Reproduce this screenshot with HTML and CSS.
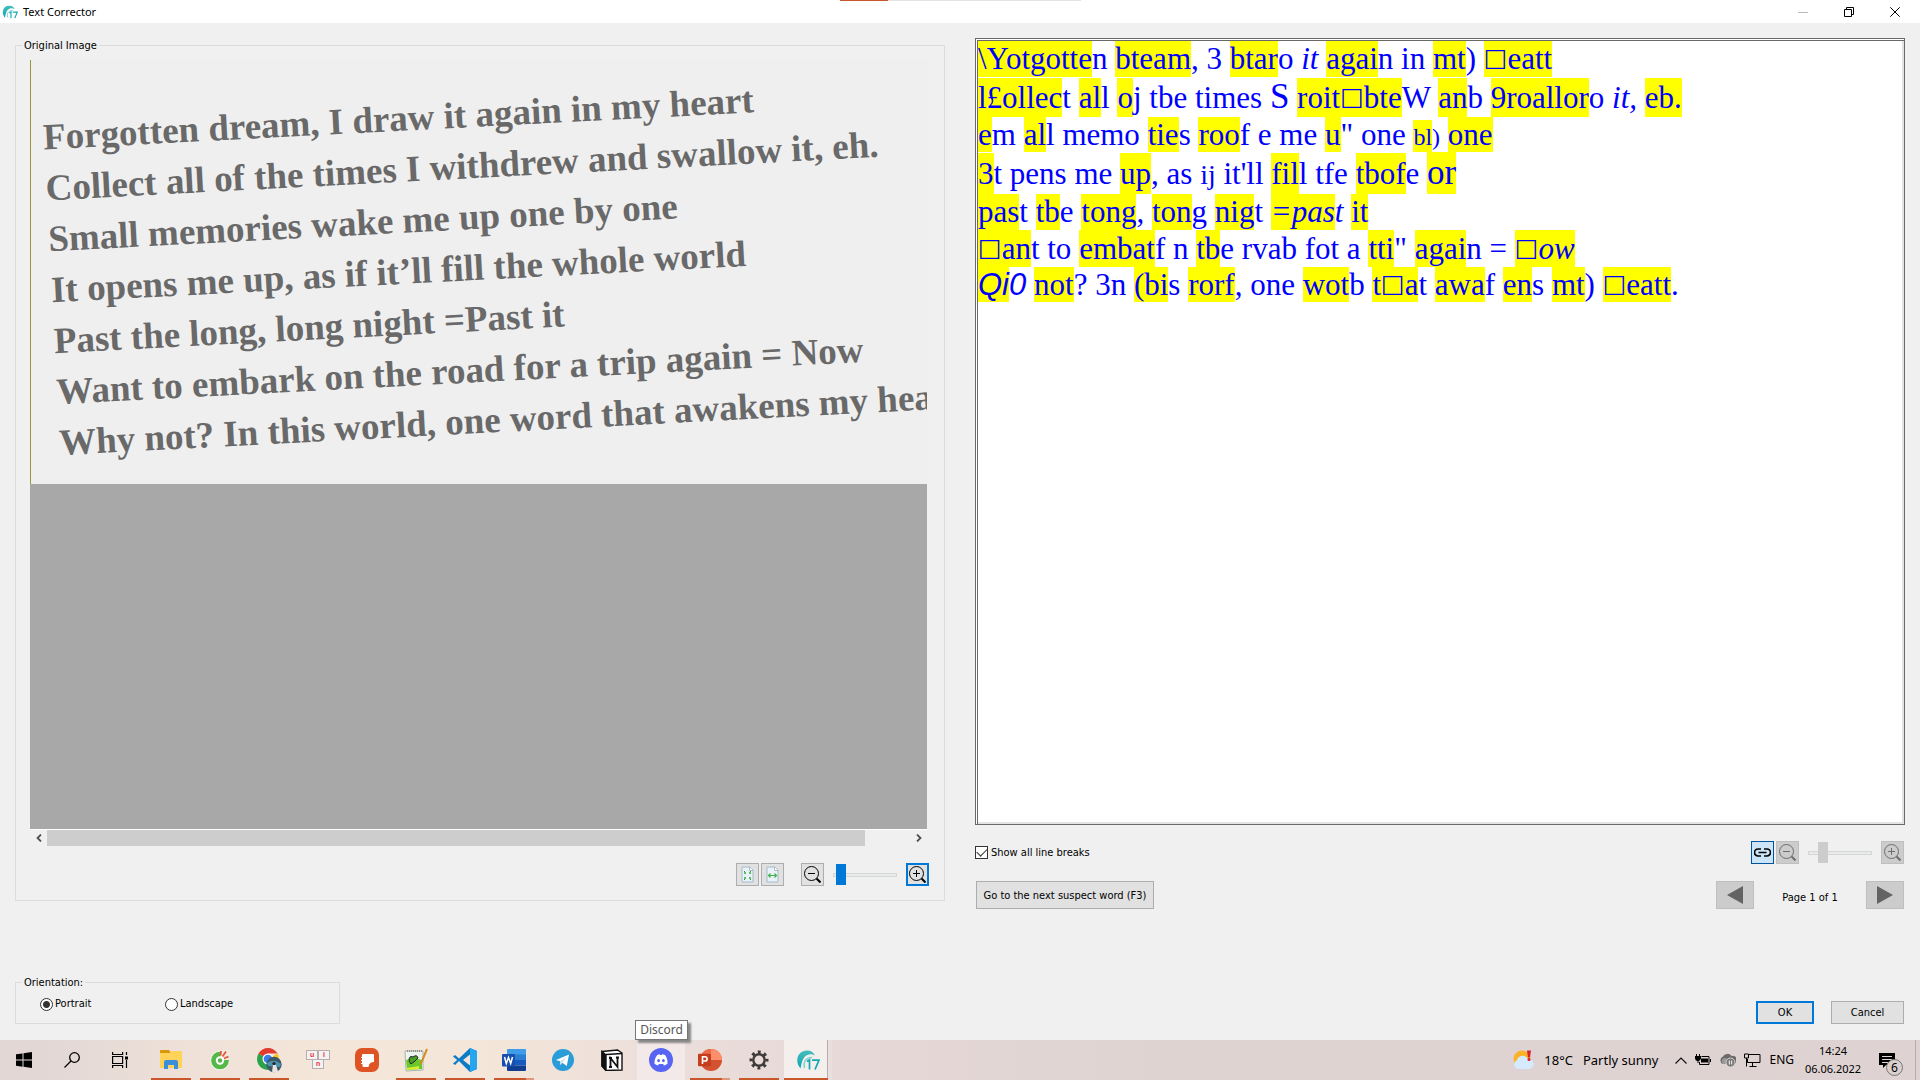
FILE: index.html
```html
<!DOCTYPE html>
<html lang="en">
<head>
<meta charset="utf-8">
<title>Text Corrector</title>
<link rel="stylesheet" href="styles.css">
</head>
<body>
<header class="titlebar">
  <svg class="app-icon" viewBox="0 0 24 20" aria-hidden="true"><use href="#logo17"/></svg>
  <h1 class="title">Text Corrector</h1>
  <button class="win-btn" aria-label="Minimize"><svg width="10" height="10"><path d="M0 5.500h10" stroke="#bbb" fill="none"/></svg></button>
  <button class="win-btn" aria-label="Restore"><svg width="10" height="10"><path d="M.5 2.500h7v7h-7zM2.500 2.500v-2h7v7h-2" stroke="#000" fill="none"/></svg></button>
  <button class="win-btn" aria-label="Close"><svg width="10" height="10"><path d="M.3 .3l9.400 9.400M9.700 .3L.3 9.700" stroke="#000" fill="none"/></svg></button>
  <div class="top-strip"></div>
</header>

<svg class="defs" aria-hidden="true">
  <defs>
    <linearGradient id="teal" x1="0" y1="0" x2="0" y2="1"><stop offset="0" stop-color="#45bdb9"/><stop offset="1" stop-color="#0fa7b5"/></linearGradient>
    <symbol id="logo17" viewBox="0 0 24 20">
      <path d="M4.500 18.500C-1 12.500.5 2.500 9 .8c5-1 8.500 1.200 10 4.700C16 3.800 11.500 3.500 8.500 7c-2.600 3-3 7-4 11.500z" fill="url(#teal)"/>
      <path d="M8.500 18C7 12 9.500 8 16 7.500" fill="none" stroke="#7fd3cf" stroke-width="1.500"/>
      <path d="M11 11.500l2.500-1.500v9.500M16 10.200h7l-4 9.300" fill="none" stroke="#12a9b5" stroke-width="1.700"/>
    </symbol>
    <symbol id="zoom-out" viewBox="0 0 17 17"><circle cx="7.500" cy="7.500" r="7" fill="none" stroke="currentColor"/><path d="M4 7.500h7" stroke="currentColor"/><path d="M12.500 12.500l4 4" stroke="currentColor" stroke-width="2"/></symbol>
    <symbol id="zoom-in" viewBox="0 0 17 17"><circle cx="7.500" cy="7.500" r="7" fill="none" stroke="currentColor"/><path d="M4 7.500h7M7.500 4v7" stroke="currentColor"/><path d="M12.500 12.500l4 4" stroke="currentColor" stroke-width="2"/></symbol>
    <symbol id="page" viewBox="0 0 13 17"><path d="M1 1h8l3 3v12H1z" fill="#e9f2f8" stroke="#a9bac6"/><path d="M8.500 1v3.500H12" fill="#fff" stroke="#a9bac6"/></symbol>
  </defs>
</svg>

<main class="window">
  <section class="column">
    <fieldset class="group source">
      <legend>Original Image</legend>
      <div class="viewer">
        <div class="scan">
          <div class="scan-text">
            <p>Forgotten dream, I draw it again in my heart</p>
            <p>Collect all of the times I withdrew and swallow it, eh.</p>
            <p>Small memories wake me up one by one</p>
            <p>It opens me up, as if it’ll fill the whole world</p>
            <p>Past the long, long night =Past it</p>
            <p>Want to embark on the road for a trip again = Now</p>
            <p>Why not? In this world, one word that awakens my heart</p>
          </div>
        </div>
        <div class="void"></div>
        <div class="scrollbar">
          <button class="scroll-btn" aria-label="Scroll left"><svg width="6" height="8"><path d="M5 .5L1.500 4 5 7.500" fill="none" stroke="#505050" stroke-width="1.800"/></svg></button>
          <div class="scroll-track"><div class="scroll-thumb"></div><div class="scroll-rest"></div></div>
          <button class="scroll-btn" aria-label="Scroll right"><svg width="6" height="8"><path d="M1 .5L4.500 4 1 7.500" fill="none" stroke="#505050" stroke-width="1.800"/></svg></button>
        </div>
      </div>
      <div class="tools">
        <button class="tool" aria-label="Fit page"><svg width="13" height="17"><use href="#page"/><path d="M3 7h2M8 7h2M3 12h2M8 12h2" stroke="#5cc067" stroke-width="2"/><path d="M3 5.500h1M9 5.500h1M3 13.500h1M9 13.500h1" stroke="#2a9d38"/></svg></button>
        <button class="tool" aria-label="Fit width"><svg width="13" height="17"><use href="#page"/><path d="M2.500 9.500h8M4.500 7.500l-2 2 2 2M8.500 7.500l2 2-2 2" stroke="#3db54a" stroke-width="1.200" fill="none"/></svg></button>
        <button class="tool spaced" aria-label="Zoom out"><svg width="17" height="17"><use href="#zoom-out"/></svg></button>
        <input class="slider" type="range" min="0" max="100" value="4" aria-label="Image zoom">
        <button class="tool focused" aria-label="Zoom in"><svg width="17" height="17"><use href="#zoom-in"/></svg></button>
      </div>
    </fieldset>

    <fieldset class="group orientation">
      <legend>Orientation:</legend>
      <label class="choice"><input type="radio" name="orientation" checked>Portrait</label>
      <label class="choice"><input type="radio" name="orientation">Landscape</label>
    </fieldset>
  </section>

  <section class="column">
    <div class="editor" role="textbox" aria-multiline="true" aria-label="Recognized text" contenteditable="true" spellcheck="false">
      <p class="h36"><mark>\Yotgotte</mark>n <mark>bteam</mark>, 3 <mark>btar</mark>o <i>it</i> <mark>agai</mark>n in <mark>mt</mark>) <mark><span class="box">□</span>eatt</mark></p>
      <p class="h40"><mark>l£ollec</mark>t <mark>al</mark>l <mark>o</mark>j tbe times <span class="large">S</span> <mark>roit<span class="box">□</span>bte</mark>W <mark>an</mark>b <mark>9roallor</mark>o <i>it,</i> <mark>eb.</mark></p>
      <p class="h35"><mark>e</mark>m <mark>al</mark>l memo <mark>tie</mark>s <mark>roo</mark>f e me <mark>u</mark>" one <span class="small"><mark>bl</mark>)</span> <mark>one</mark></p>
      <p class="h42"><mark>3</mark>t pens me <mark>up</mark>, as <span class="mid">ij</span> it'll <mark>fil</mark>l tfe <mark>tbof</mark>e <mark class="large">or</mark></p>
      <p class="h36"><mark>pas</mark>t <mark>tb</mark>e <mark>tong</mark>, <mark>ton</mark>g <mark>nig</mark>t <i><mark>=pas</mark>t</i> <mark>it</mark></p>
      <p class="h37"><mark><span class="box">□</span>an</mark>t to <mark>embat</mark>f n <mark>tb</mark>e rvab fot a <mark>tti</mark>" <mark>agai</mark>n = <mark><span class="box">□</span><i>ow</i></mark></p>
      <p class="h35"><span class="sans"><mark>Qi</mark>0</span> <mark>not</mark>? 3n <mark>(bi</mark>s <mark>rorf</mark>, one <mark>wot</mark>b <mark>t<span class="box">□</span>a</mark>t <mark>awa</mark>f <mark>en</mark>s <mark>mt</mark>) <mark><span class="box">□</span>eatt</mark>.</p>
    </div>
    <div class="row view-row">
      <label class="check"><input type="checkbox" checked>Show all line breaks</label>
      <button class="tool linked" aria-label="Link zoom"><svg width="17" height="9"><path d="M7 1H4a3.500 3.500 0 0 0 0 7h3M10 1h3a3.500 3.500 0 0 1 0 7h-3M4.500 4.500h8" fill="none" stroke="#000" stroke-width="1.700"/></svg></button>
      <button class="tool" disabled aria-label="Zoom text out"><svg width="17" height="17"><use href="#zoom-out"/></svg></button>
      <input class="slider" type="range" min="0" max="100" value="18" disabled aria-label="Text zoom">
      <button class="tool" disabled aria-label="Zoom text in"><svg width="17" height="17"><use href="#zoom-in"/></svg></button>
    </div>
    <div class="row page-row">
      <button class="btn next-word">Go to the next suspect word (F3)</button>
      <button class="btn nav" disabled aria-label="Previous page"><svg width="16" height="18"><path d="M0 9L16 0v18z" fill="#636363"/></svg></button>
      <span class="page-no">Page 1 of 1</span>
      <button class="btn nav" disabled aria-label="Next page"><svg width="16" height="18"><path d="M16 9L0 0v18z" fill="#636363"/></svg></button>
    </div>
    <div class="row actions">
      <button class="btn ok">OK</button>
      <button class="btn cancel">Cancel</button>
    </div>
  </section>
</main>

<footer class="taskbar">
  <button class="sys" aria-label="Start"><svg width="16" height="16"><path d="M0 2.300L6.500 1.400v6.200H0zM7.500 1.200L16 0v7.600H7.500zM0 8.500h6.500v6.200L0 13.800zM7.500 8.500H16V16l-8.500-1.200z"/></svg></button>
  <button class="sys" aria-label="Search"><svg width="16" height="16" fill="none" stroke="#000" stroke-width="1.300"><circle cx="10.500" cy="5.500" r="4.800"/><path d="M7 9L.5 15.500"/></svg></button>
  <button class="sys" aria-label="Task view"><svg width="17" height="16" fill="none" stroke="#000" stroke-width="1.200"><path d="M.6 0v2.500h10V0M.6 16v-2.500h10V16M.6 4.500h10v7H.6zM14.500 0v3M14.500 8v8"/><path d="M13 4.500h3v3h-3z" fill="#000" stroke="none"/></svg></button>
  <nav class="apps">
    <button class="app open" aria-label="File Explorer"><svg width="22" height="20"><path d="M0 1a1 1 0 0 1 1-1h8l2 3H0z" fill="#d9980c"/><path d="M0 3l10 0 1.500-2H21a1 1 0 0 1 1 1v16H0z" fill="#ffd25a"/><path d="M4 19v-7a2 2 0 0 1 2-2h10a2 2 0 0 1 2 2v7h-4v-4H8v4z" fill="#3a8fd8"/></svg></button>
    <button class="app open" aria-label="Coc Coc"><svg width="20" height="20"><circle cx="10" cy="10.500" r="9.300" fill="#55b848" stroke="#fff" stroke-width=".8"/><path d="M10 0h10v10l-9 0z" fill="#f3e8dc"/><circle cx="10" cy="10.500" r="4.200" fill="#fff"/><circle cx="10" cy="10.500" r="2.200" fill="#55b848"/><path d="M10.500 5.500l.5-4.500M12.500 6.500L16 1.500M14 8.500l4.500-2" stroke="#e4573d" stroke-width="1.800"/></svg></button>
    <button class="app open" aria-label="Chrome"><svg width="26" height="26"><path d="M12 12L2.500 6.500A11 11 0 0 0 12 23z" fill="#2ba24c"/><path d="M12 12l9.500-5.500A11 11 0 0 1 12 23z" fill="#fbc116"/><path d="M2.500 6.500a11 11 0 0 1 19 0H12v5.500z" fill="#e33b2e"/><circle cx="12" cy="12" r="5.500" fill="#fff"/><circle cx="12" cy="12" r="4.300" fill="#3b7ded"/><circle cx="18" cy="17.500" r="7.700" fill="#3d5967"/><path d="M11 16q7-5 14 1l-1 3-12-1z" fill="#4c93ae"/><path d="M17 18h3l2 6.500q-3 2-6 0z" fill="#e8e4e0"/><circle cx="18" cy="16.500" r="1.600" fill="#2b2426"/></svg></button>
    <button class="app" aria-label="UniKey"><svg class="keys" width="24" height="20"><g fill="#f4f2f2" stroke="#b5aeac"><rect x=".5" y=".5" width="11" height="9"/><rect x="12.500" y=".5" width="11" height="9"/><rect x="6.500" y="9.500" width="11" height="9"/></g><g fill="#e8343c"><text x="4" y="7">u</text><text x="17" y="7">i</text><text x="10" y="16">n</text></g></svg></button>
    <button class="app" aria-label="Notes"><svg width="24" height="24"><rect width="24" height="24" rx="7" fill="#df5424"/><path d="M8 6h10a1 1 0 0 1 1 1v7q-5 0-5.500 5H8.500a1 1 0 0 1-1-1V16H6v-1h1v-2H6v-1h1v-2H6V9h1V7a1 1 0 0 1 1-1z" fill="#fff"/></svg></button>
    <button class="app open" aria-label="Notepad++"><svg width="24" height="24"><path d="M1 3h18v19L2 23z" fill="#eef3ee" stroke="#a8b5b0"/><path d="M2 12q8-3 16 0l0 9-15 1z" fill="#6cc72d"/><path d="M3 20l12-2v3l-12 1z" fill="#d5ee30"/><path d="M5 11q1-4 4-2 4-3 5 1l-3 3-4 3q-2-2-2-5z" fill="#48a02a" stroke="#222"/><path d="M23 1l-5 12-1.500 3" stroke="#d58d24" stroke-width="2"/><path d="M3 3h16" stroke="#555" stroke-dasharray="1 1"/></svg></button>
    <button class="app open" aria-label="Visual Studio Code"><svg width="24" height="24"><path d="M17 0l7 3v18l-7 3L6 13l-4 4-2-1.500L4.200 12 0 8.500 2 7l4 3.500z" fill="#0a7bc8"/><path d="M17 0l7 3v18l-7 3z" fill="#27a5ee"/><path d="M17 6.500v11L10 12z" fill="#f3e5da"/></svg></button>
    <button class="app open more" aria-label="Word"><svg width="24" height="22"><path d="M5 1a1 1 0 0 1 1-1h17a1 1 0 0 1 1 1v5H5z" fill="#3f9ce8"/><path d="M5 5.500h19V11H5z" fill="#2b7cd3"/><path d="M5 11h19v5.500H5z" fill="#185abd"/><path d="M5 16.500h19V21a1 1 0 0 1-1 1H6a1 1 0 0 1-1-1z" fill="#103f91"/><rect y="5" width="13" height="12.500" rx="1" fill="#174fae"/><path d="M2.500 8l1.800 6.500L6.500 8.500l2.200 6L10.500 8" fill="none" stroke="#fff" stroke-width="1.500"/></svg></button>
    <button class="app" aria-label="Telegram"><svg width="22" height="22"><circle cx="11" cy="11" r="11" fill="#2a9dd8"/><path d="M4 11l13-5.500-2.200 11.500-4.500-3.300L8.500 16l-.4-3.800z" fill="#fff"/><path d="M8.100 12.200L14.500 8l-4.200 5.700L8.500 16z" fill="#c5dff0"/></svg></button>
    <button class="app" aria-label="Notion"><svg width="22" height="22"><path d="M1 2.500L16.500 1 21 4v17L5 21.500 1 17z" fill="#fff" stroke="#111" stroke-width="1.400"/><path d="M1 2.500L5 6v15.500L1 17zM5 5.500L21 4.500" fill="#111" stroke="#111" stroke-width="1.400"/><path d="M9.500 18V9l7 9V8.500M8 9h3M15 8.500h3M8 18h3" fill="none" stroke="#111" stroke-width="1.800"/></svg></button>
    <button class="app hover" aria-label="Discord"><svg width="24" height="24"><circle cx="12" cy="12" r="12" fill="#5765f2"/><path d="M8.300 7q1.500-.7 2.400-.8l.5.900h1.600l.5-.9q1.200.1 2.700.8Q19 11 18.500 15.800 17 17 15 17.400l-.9-1.300H9.900L9 17.400Q7 17 5.500 15.800 5 11 8.300 7z" fill="#fff"/><ellipse cx="9.600" cy="12.600" rx="1.400" ry="1.600" fill="#5765f2"/><ellipse cx="14.400" cy="12.600" rx="1.400" ry="1.600" fill="#5765f2"/></svg><span class="tip" role="tooltip">Discord</span></button>
    <button class="app open more" aria-label="PowerPoint"><svg width="24" height="22"><circle cx="13" cy="11" r="11" fill="#d35230"/><path d="M13 0a11 11 0 0 1 11 11H13z" fill="#ff8f6b"/><path d="M13 0a11 11 0 0 0-11 11h11z" fill="#ed6c47"/><rect y="4.800" width="13" height="12.500" rx="1" fill="#c43e1c"/><path d="M4.500 15V7.800h2.500a2 2 0 0 1 0 4.200H4.500" fill="none" stroke="#fff" stroke-width="1.600"/></svg></button>
    <button class="app open" aria-label="Settings"><svg width="20" height="20" fill="none" stroke="#3d3a3a"><circle cx="10" cy="10" r="5.700" stroke-width="2.400"/><circle cx="10" cy="10" r="8" stroke-width="3" stroke-dasharray="2.900 3.383" stroke-dashoffset="1.450"/></svg></button>
    <button class="app active" aria-label="Text Corrector"><svg width="24" height="20"><use href="#logo17"/></svg></button>
  </nav>
  <div class="tray">
    <button class="weather"><svg width="22" height="20"><circle cx="10" cy="9" r="8.500" fill="#fbb226"/><path d="M5 19a5 5 0 0 1 0-9 6 6 0 0 1 11-1 5 5 0 0 1 1 10z" fill="#d5eafc"/><path d="M15 .5h4l-1 7h-2z" fill="#d9202d"/><circle cx="17" cy="9.500" r="1.500" fill="#d9202d"/></svg><span>18°C</span><span>Partly sunny</span></button>
    <div class="status">
      <svg width="12" height="7"><path d="M.5 6.500L6 1l5.500 5.500" fill="none" stroke="#111" stroke-width="1.200"/></svg>
      <svg width="16" height="12"><path d="M6 4.500h7v4H6z"/><path d="M6.500 2.500h7.500v8H4.500V8M15.500 5v3M1.500 0v2M4.500 0v2" fill="none" stroke="#000"/><path d="M0 2h6v2.500Q5 7 3.500 7v2h-1V7Q.5 7 0 4.500z"/></svg>
      <svg width="17" height="14"><path d="M4 11a4 4 0 0 1 0-7.500A5 5 0 0 1 12.500 3 4 4 0 0 1 15 11z" fill="#6d6a6a"/><path d="M4 11a3.500 3.500 0 0 1 1-6q4-1 7 6z" fill="#999"/><circle cx="11.500" cy="9.500" r="4.500" fill="#777" stroke="#ded3d3"/><path d="M10.300 7.500v4M12.700 7.500v4" stroke="#fff"/></svg>
      <svg width="17" height="14" fill="none" stroke="#000"><path d="M5 1.500h11v8H3.500V6M8.500 10v3M5.500 13.500h7M.5 1h4v4h-4zM2.500 5v8.500"/></svg>
      <span>ENG</span>
    </div>
    <time class="clock" datetime="2022-06-06T14:24"><span>14:24</span><span>06.06.2022</span></time>
    <button class="notes" aria-label="Notifications"><svg width="16" height="15"><path d="M0 0h16v12H7l-3 3v-3H0z"/><path d="M3 3.500h10M3 6.500h10M3 9.500h6" stroke="#e0d5d5"/></svg><span class="count">6</span></button>
  </div>
</footer>
</body>
</html>
```
FILE: styles.css
```css
* { box-sizing: border-box; }
body {
  margin: 0;
  min-height: 100vh;
  display: flex;
  flex-direction: column;
  overflow: hidden;
  background: #f0f0f0;
  color: #000;
  font: 11px/16px "DejaVu Sans Condensed", "DejaVu Sans", sans-serif;
}
button { font: inherit; color: inherit; margin: 0; padding: 0; border: 0; background: none; }
input { margin: 0; }
svg { display: block; flex: none; }
.defs { position: absolute; width: 0; height: 0; }

/* Title bar */
.titlebar {
  position: relative;
  height: 23px;
  display: flex;
  align-items: center;
  padding: 0 14px 0 2px;
  background: #fff;
}
.app-icon { width: 16px; height: 14px; margin-right: 5px; }
.title { flex: 1; margin: 0; font: 11px/16px "Noto Sans", sans-serif; }
.win-btn { width: 46px; height: 20px; display: flex; justify-content: center; align-items: center; }
.win-btn:last-of-type { width: 23px; margin-left: 11px; }
.top-strip {
  position: absolute;
  top: 0;
  left: 840px;
  width: 241px;
  height: 1px;
  background: linear-gradient(90deg, #c8582b 48px, #e3e3e3 48px);
}

/* Window body */
.window {
  flex: 1;
  display: grid;
  grid-template-columns: minmax(0, 1fr) minmax(0, 1fr);
  gap: 30px;
  padding: 14px 15px 16px;
}
.column { display: flex; flex-direction: column; min-width: 0; }
.group { min-width: 0; margin: 0; border: 1px solid #dcdcdc; }
.group legend { padding: 1px 2px 0; line-height: 15px; }
.source { flex: 1; display: flex; flex-direction: column; padding: 7px 15px 14px 14px; }
.source legend { margin-left: -8px; }

.viewer { flex: 1; display: flex; flex-direction: column; margin-right: 2px; }
.scan { height: 424px; overflow: hidden; border-left: 1px solid #999933; background: #efefef; }
.scan-text {
  padding: 52px 0 0 8px;
  transform: rotate(-3deg);
  transform-origin: 0 0;
  color: #696969;
  font: bold 37px/51px "Liberation Serif", serif;
  white-space: nowrap;
}
.scan-text p { margin: 0; }
.void { flex: 1; background: #a8a8a8; border-bottom: 1px solid #fff; }
.scrollbar { height: 16px; display: flex; margin-bottom: 1px; }
.scroll-btn { width: 17px; display: flex; justify-content: center; align-items: center; }
.scroll-track { flex: 1; display: flex; }
.scroll-thumb { flex: 18; background: #cdcdcd; }
.scroll-rest { flex: 1; }

/* Tool buttons and sliders */
.tools { display: flex; justify-content: flex-end; gap: 2px; margin-top: 16px; }
.tool {
  width: 23px;
  height: 23px;
  display: flex;
  justify-content: center;
  align-items: center;
  border: 1px solid #adadad;
  background: #e1e1e1;
}
.tool.spaced { margin-left: 15px; }
.tool.focused { border: 2px solid #0078d7; }
.tool.linked { border-color: #005499; background: #cce4f7; }
.tool:disabled { border-color: #bfbfbf; background: #ccc; color: #6d6d6d; }
.slider {
  appearance: none;
  width: 64px;
  height: 23px;
  margin: 0 7px;
  background: none;
  --thumb: #0078d7;
}
.slider:disabled { --thumb: #ccc; }
.slider::-webkit-slider-runnable-track { height: 4px; border: 1px solid #d6d6d6; background: #e7eaea; }
.slider::-webkit-slider-thumb {
  appearance: none;
  width: 10px;
  height: 21px;
  margin-top: -10px;
  background: var(--thumb);
}

/* Orientation */
.orientation { width: 325px; margin-top: 73px; padding: 6px 0 11px 24px; display: flex; }
.orientation legend { margin-left: -18px; }
.choice { width: 125px; display: flex; align-items: center; gap: 2px; height: 16px; }
.choice input, .check input {
  appearance: none;
  width: 13px;
  height: 13px;
  border: 1px solid #333;
  background: #fff;
}
.choice input { border-radius: 50%; }
.choice input:checked { background: radial-gradient(circle, #333 3px, #fff 4px); }

/* Recognized text */
.editor {
  flex: 1;
  margin-top: 1px;
  border: 3px double #696969;
  border-right: 1px solid #696969;
  border-bottom: 1px solid #696969;
  box-shadow: inset -2px -2px 0 #e3e3e3;
  background: #fff;
  color: #00f;
  font: 31px/36px "Liberation Serif", serif;
  white-space: nowrap;
  overflow: hidden;
}
.editor p { margin: 0; overflow: hidden; white-space: pre; }
.editor mark { display: inline-block; background: #ff0; color: inherit; }
.large { font-size: 35px; }
.mid { font-size: 28px; }
.small { font-size: 24px; }
.sans { font-family: "Liberation Sans", sans-serif; font-style: italic; }
.box { font: 25px/25px "DejaVu Sans", sans-serif; vertical-align: 3px; }
.h35, .h35 mark { height: 35px; line-height: 35px; }
.h36, .h36 mark { height: 36px; line-height: 36px; }
.h37, .h37 mark { height: 37px; line-height: 37px; }
.h40, .h40 mark { height: 40px; line-height: 40px; }
.h42, .h42 mark { height: 42px; line-height: 42px; }

.row { display: flex; align-items: center; padding-right: 1px; }
.view-row { margin-top: 16px; gap: 2px; }
.check { flex: 1; display: flex; align-items: center; gap: 3px; }
.check input {
  display: grid;
  place-content: center;
}
.check input:checked::before {
  content: "";
  width: 9px;
  height: 5px;
  border: solid #333;
  border-width: 0 0 1px 1px;
  transform: rotate(-45deg);
  margin-top: -3px;
}
.btn { border: 1px solid #adadad; background: #e1e1e1; height: 23px; padding-top: 1px; }
.page-row { margin-top: 17px; padding-left: 1px; }
.page-row .btn { height: 28px; }
.next-word { width: 178px; margin-right: auto; }
.btn.nav { width: 38px; display: flex; justify-content: center; align-items: center; padding: 0; }
.nav:disabled { border-color: #bfbfbf; background: #ccc; }
.page-no { width: 112px; text-align: center; padding-top: 5px; }
.actions { margin-top: 92px; justify-content: flex-end; gap: 17px; }
.ok { width: 58px; border: 2px solid #0078d7; }
.cancel { width: 73px; }

/* Taskbar */
.taskbar {
  height: 40px;
  display: flex;
  background: linear-gradient(90deg, #e3d6d6, #e3d8d6 3%, #efe1d8 10%, #f4e6d8 17%, #f4e6d8 25%, #eee0da 32%, #e6d9d8 42%, #dfd3d2 60%, #ded3d2);
  font: 12px/16px "Noto Sans", sans-serif;
}
.sys { width: 48px; display: flex; justify-content: center; align-items: center; }
.apps { display: flex; gap: 1px; margin-left: 3px; }
.app {
  position: relative;
  width: 48px;
  display: flex;
  justify-content: center;
  align-items: center;
}
.app.open::after, .app.active::after {
  content: "";
  position: absolute;
  left: 4px;
  right: 4px;
  bottom: 0;
  height: 2px;
  background: #c8582b;
}
.app.more::after { background: linear-gradient(90deg, #c8582b 32px, #df977e 32px); }
.app.hover { background: #f3e9e8; }
.app.active {
  padding-left: 4px;
  border-right: 4px solid #e9dfde;
  box-shadow: inset -1px 0 0 #b9aeae;
  background: #f4eeed;
}
.app.active::after { left: 0; right: 0; }
.keys { font: bold 7px/8px "Liberation Sans", sans-serif; }
.tip {
  position: absolute;
  left: -2px;
  bottom: 40px;
  width: 53px;
  height: 20px;
  border: 1px solid #767676;
  background: #fff;
  box-shadow: 3px 3px 2px #888;
  color: #575757;
  font: 12px/18px "Noto Sans", sans-serif;
}
.tray { flex: 1; display: flex; justify-content: flex-end; align-items: center; padding-right: 4px; }
.weather { display: flex; align-items: center; gap: 10px; margin-right: 17px; font-size: 13px; }
.status { display: flex; align-items: center; gap: 8px; }
.clock { width: 78px; display: flex; flex-direction: column; align-items: center; font-size: 11px; line-height: 18px; }
.notes { position: relative; width: 44px; height: 40px; padding: 0 0 0 7px; display: flex; align-items: center; border-right: 1px solid #b7abab; }
.count {
  position: absolute;
  left: 14px;
  top: 19px;
  width: 17px;
  height: 17px;
  border: 1px solid #777;
  border-radius: 50%;
  background: #d9cfcf;
  line-height: 15px;
}
```
